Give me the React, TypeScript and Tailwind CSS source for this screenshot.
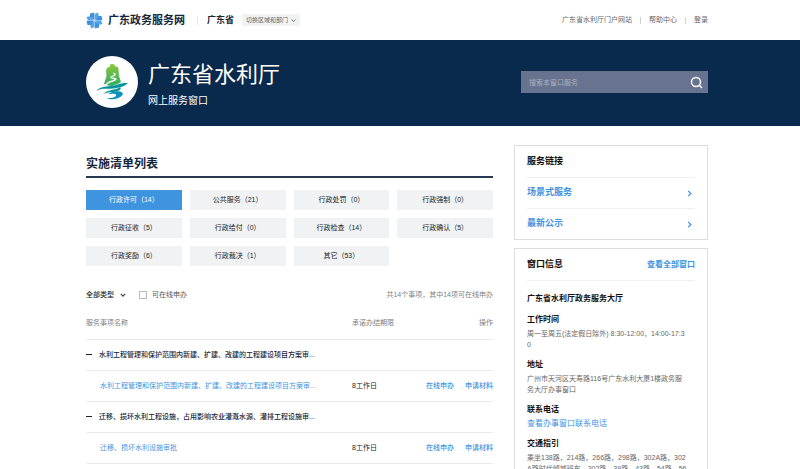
import { Fragment, useState } from 'react';

const categories = [
  { name: '行政许可', count: 14 },
  { name: '公共服务', count: 21 },
  { name: '行政处罚', count: 0 },
  { name: '行政强制', count: 0 },
  { name: '行政征收', count: 5 },
  { name: '行政给付', count: 0 },
  { name: '行政检查', count: 14 },
  { name: '行政确认', count: 5 },
  { name: '行政奖励', count: 6 },
  { name: '行政裁决', count: 1 },
  { name: '其它', count: 53 },
];

const services = [
  {
    group: '水利工程管理和保护范围内新建、扩建、改建的工程建设项目方案审...',
    items: [{ name: '水利工程管理和保护范围内新建、扩建、改建的工程建设项目方案审...', limit: '8工作日' }],
  },
  {
    group: '迁移、损坏水利工程设施，占用影响农业灌溉水源、灌排工程设施审...',
    items: [{ name: '迁移、损坏水利设施审批', limit: '8工作日' }],
  },
];

const serviceLinks = ['场景式服务', '最新公示'];

function Chevron({ className }: { className: string }) {
  return (
    <svg viewBox="0 0 8 8" fill="none" stroke="currentColor" strokeWidth="1.5" className={className} aria-hidden="true">
      <path d="M1 2.5 4 5.5 7 2.5" />
    </svg>
  );
}

function PinwheelLogo() {
  return (
    <svg viewBox="0 0 34 34" className="size-[17px]" aria-hidden="true">
      {[0, 90, 180, 270].map((angle) => (
        <g key={angle} transform={`rotate(${angle} 17 17)`}>
          <path d="M16.700 16.500 8 9.500V3L16.500 1Z" fill="#3c92de" />
          <path d="M17.200 16V4L24 1 25.500 8Z" fill="#55a4e8" />
        </g>
      ))}
    </svg>
  );
}

function WaterLogo() {
  return (
    <svg viewBox="0 0 52 52" className="size-[52px] shrink-0" aria-hidden="true">
      <defs>
        <linearGradient id="peak" x1="0" y1="0" x2="0" y2="1">
          <stop offset="0" stopColor="#8cc63f" />
          <stop offset="1" stopColor="#2fae62" />
        </linearGradient>
        <linearGradient id="river" x1="0" y1="0" x2="1" y2="1">
          <stop offset="0" stopColor="#07977d" />
          <stop offset="1" stopColor="#0a8fc0" />
        </linearGradient>
      </defs>
      <circle cx="26" cy="26" r="26" fill="#fff" />
      <path
        d="M18 28 20.500 20 20 14 22 11 23.500 11.500 24 8.500 26 8 28.500 8.500 29 10.500 31.500 10.500 32.500 13 33 20 35 26 31.500 28 26 30 22 29.500Z"
        fill="url(#peak)"
      />
      <path
        d="M27 17C30 18 30 19 27 20S24 22 28 22.500 29 24.500 25 25.500 21 28 19 30"
        fill="none"
        stroke="#fff"
        strokeWidth="1.3"
      />
      <path d="M10 35C16 29 24 31 30 29S38 27 42 27C38 31 33 31.500 27 32.500S17 31.500 10 35Z" fill="url(#river)" />
      <path d="M17 38C22 33 31 34 34 31 37 34 30 36 26 36S20 37 17 38Z" fill="#0a9a91" />
      <path d="M26 36C33 34 39 36 36 39.500 33 43 25 44.500 21 42 27 42.500 31 40.500 30 38.500 29 37 26 38 22 38Z" fill="#0a8fc0" />
    </svg>
  );
}

function SiteHeader() {
  return (
    <header className="bg-white pr-[6px]">
      <div className="mx-auto flex h-10 max-w-[622px] items-center">
        <a href="#" className="flex items-center gap-[5px] text-[11px] font-bold text-[#14263b]">
          <PinwheelLogo />
          广东政务服务网
        </a>
        <span className="ml-3 h-[9px] w-px bg-[#e8e8e8]" />
        <span className="ml-[9px] text-[9px] leading-4 font-bold text-[#14263b]">广东省</span>
        <button className="ml-2 flex h-3 items-center gap-[3px] bg-[#f0f2f4] px-1 text-[6px] text-[#666]">
          切换区域和部门
          <Chevron className="size-[5px]" />
        </button>
        <nav className="ml-auto flex items-center gap-2 text-[7px] text-[#666]">
          <a href="#">广东省水利厅门户网站</a>
          <span className="h-[7px] w-px bg-[#d0d0d0]" />
          <a href="#">帮助中心</a>
          <span className="h-[7px] w-px bg-[#d0d0d0]" />
          <a href="#">登录</a>
        </nav>
      </div>
    </header>
  );
}

function Banner() {
  return (
    <section className="bg-[#0a2a4d] pt-4 pr-[6px] pb-[18px]">
      <div className="mx-auto flex max-w-[622px] items-center">
        <WaterLogo />
        <div className="ml-[10px] pt-[5px] text-white">
          <h1 className="text-[22px] leading-7">广东省水利厅</h1>
          <p className="mt-[5px] text-[10px] leading-[14px]">网上服务窗口</p>
        </div>
        <form className="ml-auto flex h-[22px] w-[187px] items-center bg-[#68738f] pr-[5px]">
          <input
            type="search"
            aria-label="搜索本窗口服务"
            placeholder="搜索本窗口服务"
            className="h-full min-w-0 flex-1 bg-transparent pl-2 text-[7px] text-white outline-none placeholder:text-[#a9b1c2]"
          />
          <button type="button" aria-label="搜索" className="text-white">
            <svg viewBox="0 0 13 13" fill="none" stroke="currentColor" strokeWidth="1.4" className="size-[13px]">
              <circle cx="6" cy="6" r="4.500" />
              <path d="m9 9 3 3" />
            </svg>
          </button>
        </form>
      </div>
    </section>
  );
}

function ServiceTable() {
  return (
    <table className="w-full table-fixed text-left text-[7px] leading-[10px]">
      <thead>
        <tr className="h-[31px] border-b border-[#ececec] text-[#808080]">
          <th className="font-normal">服务事项名称</th>
          <th className="w-[60px] font-normal">承诺办结期限</th>
          <th className="w-[81px] text-right font-normal">操作</th>
        </tr>
      </thead>
      <tbody>
        {services.map((service) => (
          <Fragment key={service.group}>
            <tr className="h-[31px] border-b border-[#ececec]">
              <td colSpan={3}>
                <button className="flex items-center gap-[7px] font-medium text-[#14263b]">
                  <span className="h-px w-[6px] bg-[#14263b]" />
                  {service.group}
                </button>
              </td>
            </tr>
            {service.items.map((item) => (
              <tr key={item.name} className="h-[31px] border-b border-[#ececec]">
                <td className="pl-[14px] whitespace-nowrap text-[#3f94df]">
                  <a href="#">{item.name}</a>
                </td>
                <td className="text-[#222]">{item.limit}</td>
                <td className="text-right font-medium whitespace-nowrap text-[#3f94df]">
                  <a href="#">在线申办</a>
                  <a href="#" className="ml-[11px]">
                    申请材料
                  </a>
                </td>
              </tr>
            ))}
          </Fragment>
        ))}
      </tbody>
    </table>
  );
}

function ServiceList() {
  const [active, setActive] = useState('行政许可');

  return (
    <main className="min-w-0 flex-1 pt-7">
      <h2 className="border-b-2 border-[#2a3a4e] pb-[2px] text-[12px] leading-5 font-bold text-[#14263b]">
        实施清单列表
      </h2>
      <div className="mt-3 grid grid-cols-4 gap-2">
        {categories.map((c) => (
          <button
            key={c.name}
            onClick={() => setActive(c.name)}
            className={`h-5 text-[7px] ${active === c.name ? 'bg-[#3f94df] text-white' : 'bg-[#f0f2f4] text-[#222]'}`}
          >
            {c.name}（{c.count}）
          </button>
        ))}
      </div>
      <div className="mt-6 flex h-[10px] items-center text-[7px] leading-[10px]">
        <div className="relative flex items-center">
          <select aria-label="类型" className="w-10 appearance-none bg-transparent font-medium text-[#222] outline-none">
            <option>全部类型</option>
          </select>
          <Chevron className="pointer-events-none absolute right-0 size-[6px] text-[#444]" />
        </div>
        <label className="ml-[13px] flex items-center gap-[5px] text-[#555]">
          <input type="checkbox" className="size-2 appearance-none border border-[#bbb] bg-white checked:bg-[#3f94df]" />
          可在线申办
        </label>
        <p className="ml-auto text-[#808080]">共14个事项，其中14项可在线申办</p>
      </div>
      <div className="mt-2">
        <ServiceTable />
      </div>
    </main>
  );
}

function Sidebar() {
  return (
    <aside className="w-[194px] shrink-0 space-y-2 pt-[19px]">
      <section className="border border-[#dcdcdc] px-3">
        <h2 className="text-[9px] leading-[31px] font-bold text-[#111]">服务链接</h2>
        {serviceLinks.map((link) => (
          <a
            key={link}
            href="#"
            className="flex h-[31px] items-center justify-between border-t border-[#f0f0f0] text-[9px] font-bold text-[#3f94df]"
          >
            {link}
            <Chevron className="mr-[2px] size-[7px] -rotate-90" />
          </a>
        ))}
      </section>

      <section className="border border-[#dcdcdc] px-3 pb-4">
        <div className="flex h-8 items-center justify-between border-b border-[#f0f0f0]">
          <h2 className="text-[9px] font-bold text-[#111]">窗口信息</h2>
          <a href="#" className="text-[8px] font-bold text-[#3f94df]">
            查看全部窗口
          </a>
        </div>
        <h3 className="mt-3 text-[8px] leading-3 font-bold text-[#111]">广东省水利厅政务服务大厅</h3>
        <dl className="text-[7px] leading-[11px] break-all text-[#666]">
          <dt className="mt-[9px] text-[8px] font-bold text-[#111]">工作时间</dt>
          <dd className="mt-[3px] pr-2">周一至周五(法定假日除外) 8:30-12:00，14:00-17:30</dd>
          <dt className="mt-[9px] text-[8px] font-bold text-[#111]">地址</dt>
          <dd className="mt-[3px] pr-2">广州市天河区天寿路116号广东水利大厦1楼政务服务大厅办事窗口</dd>
          <dt className="mt-[9px] text-[8px] font-bold text-[#111]">联系电话</dt>
          <dd className="mt-[3px] text-[8px] text-[#3f94df]">
            <a href="#">查看办事窗口联系电话</a>
          </dd>
          <dt className="mt-[9px] text-[8px] font-bold text-[#111]">交通指引</dt>
          <dd className="mt-[3px] pr-2">
            乘坐138路，214路，266路，298路，302A路，302A路时代倾城班车，302路，39路，43路，54路，56路
          </dd>
        </dl>
      </section>
    </aside>
  );
}

export default function App() {
  return (
    <div
      lang="zh-CN"
      className="min-h-screen bg-white font-['Liberation_Sans','Noto_Sans_CJK_SC',sans-serif]"
    >
      <SiteHeader />
      <Banner />
      <div className="pr-[6px]">
        <div className="mx-auto flex max-w-[622px] items-start gap-[21px]">
          <ServiceList />
          <Sidebar />
        </div>
      </div>
    </div>
  );
}
